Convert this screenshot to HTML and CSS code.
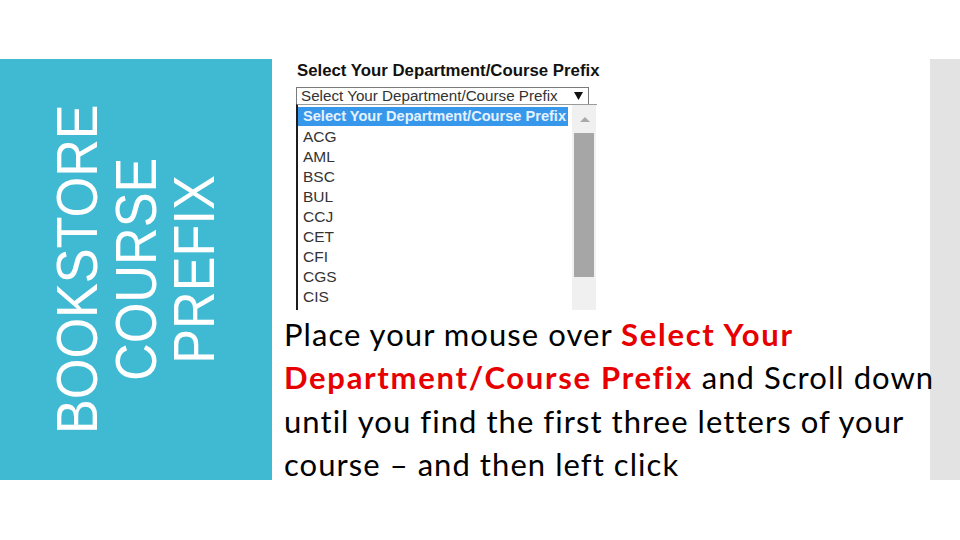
FILE: index.html
```html
<!DOCTYPE html>
<html>
<head>
<meta charset="utf-8">
<link rel="stylesheet" href="styles.css">
</head>
<body>
<div class="page">
  <div class="side">
    <h1 class="side-title">BOOKSTORE<br>COURSE<br>PREFIX</h1>
  </div>
  <div class="main">
    <div class="shot">
      <div class="shot-title">Select Your Department/Course Prefix</div>
      <div class="select">
        <span class="select-text">Select Your Department/Course Prefix</span>
        <svg class="select-arrow" width="9" height="8" viewBox="0 0 9 8"><path d="M0 0H9L4.5 8Z" fill="#111"/></svg>
      </div>
      <div class="list">
        <div class="options">
          <div class="opt opt-sel">Select Your Department/Course Prefix</div>
          <div class="opt">ACG</div>
          <div class="opt">AML</div>
          <div class="opt">BSC</div>
          <div class="opt">BUL</div>
          <div class="opt">CCJ</div>
          <div class="opt">CET</div>
          <div class="opt">CFI</div>
          <div class="opt">CGS</div>
          <div class="opt">CIS</div>
        </div>
        <div class="scroll">
          <svg class="scroll-up" width="10" height="5" viewBox="0 0 10 5"><path d="M0 5H10L5 0Z" fill="#a9a9a9"/></svg>
          <div class="thumb"></div>
        </div>
      </div>
    </div>
    <p class="note">Place your mouse over <b>Select Your</b><br><b>Department/Course Prefix</b> and Scroll down<br>until you find the first three letters of your<br>course – and then left click</p>
  </div>
  <div class="bar"></div>
</div>
</body>
</html>
```
FILE: styles.css
```css
html, body {
  margin: 0;
  padding: 0;
  background: #ffffff;
}
.page {
  margin-top: 59px;
  height: 421px;
  display: flex;
}
.side {
  width: 272px;
  flex: none;
  background: #40b9d2;
  display: flex;
  align-items: center;
  justify-content: center;
}
.side-title {
  margin: 0;
  writing-mode: vertical-rl;
  transform: rotate(180deg) scaleY(0.9);
  text-align: center;
  font-family: "Liberation Sans", Arial, sans-serif;
  font-weight: normal;
  font-size: 58px;
  line-height: 58.5px;
  color: #ffffff;
}
.main {
  flex: 1;
  padding-left: 12px;
  min-width: 0;
  position: relative;
  z-index: 1;
}
.bar {
  width: 30px;
  flex: none;
  background: #e3e3e3;
}
.shot {
  width: 312px;
  height: 251px;
  margin-left: 6px;
  box-sizing: border-box;
  padding-left: 6px;
  overflow: hidden;
  font-family: "Liberation Sans", Arial, sans-serif;
}
.shot-title {
  margin: 3px 0 7px 1px;
  height: 18px;
  font-weight: bold;
  font-size: 16.8px;
  line-height: 18px;
  color: #111;
  white-space: nowrap;
}
.select {
  width: 293px;
  height: 18px;
  box-sizing: border-box;
  border: 1px solid #7a7a7a;
  display: flex;
  align-items: center;
  justify-content: space-between;
  padding: 0 5px 0 4px;
  font-size: 15.2px;
  line-height: 16px;
  color: #333;
  white-space: nowrap;
}
.select-text {
  display: block;
}
.select-arrow {
  display: block;
}
.list {
  width: 301px;
  height: 206px;
  box-sizing: border-box;
  margin-top: -1px;
  border-top: 1px solid #9a9a9a;
  border-left: 2px solid #1c1c1c;
  display: flex;
}
.options {
  width: 272px;
  padding-top: 2px;
}
.opt {
  height: 20px;
  line-height: 21px;
  padding-left: 5px;
  font-size: 15.5px;
  color: #333;
  white-space: nowrap;
}
.opt-sel {
  width: 265px;
  height: 19px;
  line-height: 19px;
  background: #3797ea;
  color: #e4f2ff;
  font-weight: bold;
  font-size: 14.6px;
}
.scroll {
  width: 24px;
  margin-left: 2px;
  background: #f0f0f0;
  display: flex;
  flex-direction: column;
  align-items: center;
}
.scroll-up {
  display: block;
  margin-top: 12px;
  margin-left: 2px;
}
.thumb {
  width: 20px;
  height: 144px;
  margin-top: 11px;
  background: #a6a6a6;
}
.note {
  margin: 3px 0 0 0;
  font-family: Lato, "Open Sans", sans-serif;
  font-size: 31px;
  line-height: 43.4px;
  letter-spacing: 1.05px;
  color: #000;
  white-space: nowrap;
}
.note b {
  color: #e60000;
  font-weight: bold;
  letter-spacing: 1.7px;
}
```
